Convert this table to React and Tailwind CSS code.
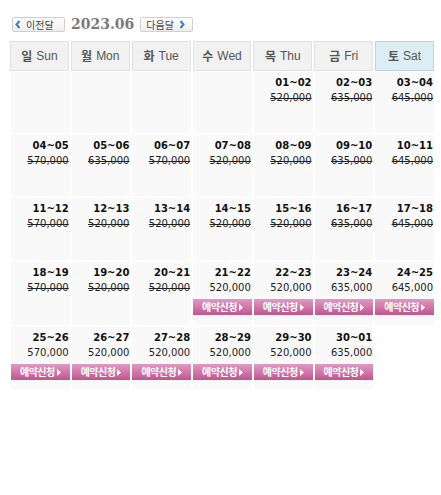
import React from "react";

const rows = [
  [null, null, null, null, ["01~02", "520,000", "s"], ["02~03", "635,000", "s"], ["03~04", "645,000", "s"]],
  [["04~05", "570,000", "s"], ["05~06", "635,000", "s"], ["06~07", "570,000", "s"], ["07~08", "520,000", "s"], ["08~09", "520,000", "s"], ["09~10", "635,000", "s"], ["10~11", "645,000", "s"]],
  [["11~12", "570,000", "s"], ["12~13", "520,000", "s"], ["13~14", "520,000", "s"], ["14~15", "520,000", "s"], ["15~16", "520,000", "s"], ["16~17", "635,000", "s"], ["17~18", "645,000", "s"]],
  [["18~19", "570,000", "s"], ["19~20", "520,000", "s"], ["20~21", "520,000", "s"], ["21~22", "520,000", "b"], ["22~23", "520,000", "b"], ["23~24", "635,000", "b"], ["24~25", "645,000", "b"]],
  [["25~26", "570,000", "b"], ["26~27", "520,000", "b"], ["27~28", "520,000", "b"], ["28~29", "520,000", "b"], ["29~30", "520,000", "b"], ["30~01", "635,000", "b"], "none"],
];

const heights = ["h-[61px]", "h-[61px]", "h-[62px]", "h-[63px]", "h-[62px]"];

const days = [
  ["일", "Sun"],
  ["월", "Mon"],
  ["화", "Tue"],
  ["수", "Wed"],
  ["목", "Thu"],
  ["금", "Fri"],
  ["토", "Sat"],
];

function Chevron({ dir }) {
  return (
    <svg width="6" height="9" viewBox="0 0 6 9" className="shrink-0">
      {dir === "left" ? (
        <polyline points="4.5,1 1.5,4.5 4.5,8" fill="none" stroke="#3b7fc4" strokeWidth="2" />
      ) : (
        <polyline points="1.5,1 4.5,4.5 1.5,8" fill="none" stroke="#3b7fc4" strokeWidth="2" />
      )}
    </svg>
  );
}

function Cell({ c, h }) {
  if (c === "none") return <div className={h}></div>;
  if (!c) return <div className={`${h} bg-[#f9f9f9]`}></div>;
  const [date, price, kind] = c;
  return (
    <div className={`${h} bg-[#f9f9f9] flex flex-col items-stretch pt-[4px] font-['DejaVu_Sans',sans-serif]`}>
      <div className="text-right pr-[1px] text-[10px] leading-[14px] font-bold text-[#111]">{date}</div>
      <div className={`text-right pr-[1px] mt-[1px] text-[10px] leading-[14px] text-[#222] ${kind === "s" ? "line-through" : ""}`}>{price}</div>
      {kind === "b" && (
        <div className="mt-[4px] h-[16px] bg-gradient-to-b from-[#df9ac4] to-[#c0558f] flex items-center justify-center gap-[2px] text-white">
          <span className="font-['Noto_Sans_CJK_KR',sans-serif] text-[10px] leading-[16px] font-bold tracking-[-0.5px]">예약신청</span>
          <svg width="4" height="7" viewBox="0 0 4 7"><polygon points="0,0 4,3.5 0,7" fill="#fff" /></svg>
        </div>
      )}
    </div>
  );
}

export default function App() {
  return (
    <div className="w-[441px] h-[495px] bg-white relative">
      <div className="flex items-center pt-[11px] pl-[12px] h-[26px] box-content">
        <div className="h-[15px] w-[53px] border border-[#cfcfcf] rounded-[2px] bg-gradient-to-b from-white to-[#eeeeee] flex items-center pl-[2px] gap-[5px]">
          <Chevron dir="left" />
          <span className="font-['Noto_Sans_CJK_KR',sans-serif] text-[10px] leading-[13px] text-[#444]">이전달</span>
        </div>
        <div className="ml-[6px] font-['DejaVu_Serif',serif] font-bold text-[14px] leading-[15px] text-[#7a7a7a]">2023.06</div>
        <div className="ml-[6px] h-[15px] w-[53px] border border-[#cfcfcf] rounded-[2px] bg-gradient-to-b from-white to-[#eeeeee] flex items-center pl-[5px] gap-[5px]">
          <span className="font-['Noto_Sans_CJK_KR',sans-serif] text-[10px] leading-[13px] text-[#444]">다음달</span>
          <Chevron dir="right" />
        </div>
      </div>

      <div className="ml-[10px] w-[424px] mt-[4px]">
        <div className="grid grid-cols-7 gap-x-[2px]">
          {days.map(([k, e], i) => (
            <div
              key={e}
              className={`h-[30px] border flex items-center justify-center gap-[4px] text-[#555] ${
                i === 6 ? "bg-[#dcedf3] border-[#b8d6e6]" : "bg-[#f1f1f1] border-[#e2e2e2]"
              }`}
            >
              <span className="font-['Noto_Sans_CJK_KR',sans-serif] text-[12px] font-bold leading-none">{k}</span>
              <span className="font-['Liberation_Sans',sans-serif] text-[12px] leading-none">{e}</span>
            </div>
          ))}
        </div>
        <div className="mt-[1px] flex flex-col gap-y-[2px] pl-[1px]">
          {rows.map((r, ri) => (
            <div key={ri} className="grid grid-cols-7 gap-x-[2px]">
              {r.map((c, ci) => (
                <Cell key={ci} c={c} h={heights[ri]} />
              ))}
            </div>
          ))}
        </div>
      </div>
    </div>
  );
}
